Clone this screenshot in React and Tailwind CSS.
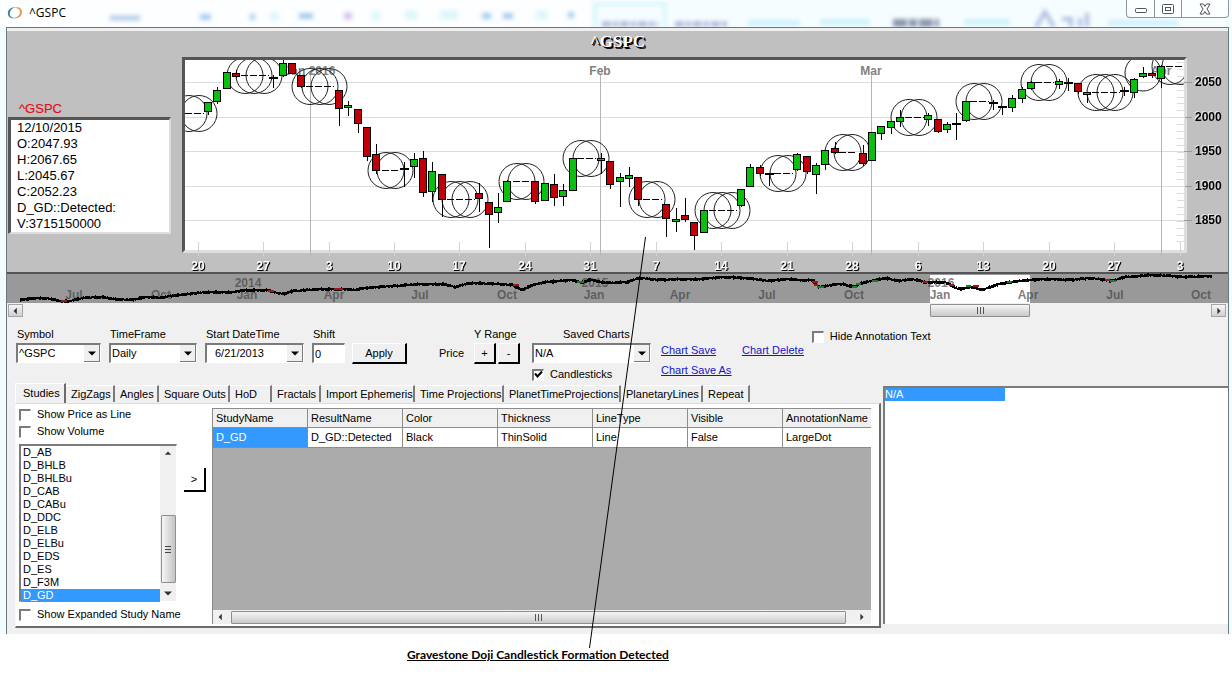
// src/App.jsx
import { useState } from "react";

// [x, kind, bodyTop, bodyBottom, high, low]  kind: g = up, r = down, d = doji
const CANDLES = [
  [208, "g", 102, 111, 102, 114],
  [217, "g", 90, 101, 87, 103],
  [227, "g", 72, 88, 72, 88],
  [236, "r", 73, 76, 70, 77],
  [273, "d", 78, 78, 75, 87],
  [283, "g", 63, 75, 60, 76],
  [292, "r", 63, 73, 63, 73],
  [301, "r", 75, 86, 75, 87],
  [339, "r", 90, 108, 90, 125],
  [348, "g", 105, 107, 101, 115],
  [358, "r", 109, 123, 109, 132],
  [367, "r", 127, 156, 127, 160],
  [376, "r", 154, 170, 144, 173],
  [404, "d", 169, 169, 162, 186],
  [414, "g", 159, 166, 153, 177],
  [423, "r", 158, 192, 151, 196],
  [432, "g", 171, 191, 162, 201],
  [442, "r", 174, 199, 174, 216],
  [479, "r", 193, 198, 183, 211],
  [489, "r", 202, 214, 202, 247],
  [498, "g", 207, 212, 193, 222],
  [507, "g", 181, 201, 180, 201],
  [535, "r", 181, 201, 181, 203],
  [545, "g", 183, 200, 183, 200],
  [554, "r", 184, 197, 174, 205],
  [563, "g", 190, 196, 184, 205],
  [573, "g", 158, 190, 158, 190],
  [601, "g", 158, 160, 153, 173],
  [610, "r", 161, 184, 161, 188],
  [620, "g", 177, 181, 173, 206],
  [629, "g", 175, 178, 167, 186],
  [638, "r", 177, 199, 177, 205],
  [666, "r", 204, 218, 204, 236],
  [676, "g", 219, 221, 208, 231],
  [685, "r", 215, 219, 198, 221],
  [694, "r", 222, 235, 222, 249],
  [704, "g", 210, 232, 210, 232],
  [741, "g", 189, 205, 189, 206],
  [750, "g", 167, 186, 164, 186],
  [760, "r", 167, 173, 165, 175],
  [769, "d", 174, 174, 173, 185],
  [797, "g", 154, 169, 153, 170],
  [807, "r", 156, 171, 156, 173],
  [816, "g", 165, 174, 163, 193],
  [825, "g", 150, 164, 150, 169],
  [835, "r", 148, 152, 142, 153],
  [863, "r", 153, 163, 145, 165],
  [872, "g", 132, 160, 132, 160],
  [881, "g", 126, 133, 126, 139],
  [891, "g", 121, 127, 121, 133],
  [900, "g", 117, 121, 110, 126],
  [928, "g", 115, 119, 113, 125],
  [938, "r", 119, 131, 119, 132],
  [947, "g", 124, 129, 122, 132],
  [956, "d", 124, 124, 113, 139],
  [966, "g", 101, 120, 101, 121],
  [993, "d", 103, 103, 100, 109],
  [1002, "d", 107, 107, 107, 114],
  [1012, "g", 98, 107, 95, 111],
  [1022, "g", 89, 98, 87, 102],
  [1031, "g", 82, 88, 81, 89],
  [1059, "g", 81, 84, 79, 88],
  [1068, "d", 83, 83, 78, 90],
  [1078, "r", 83, 91, 83, 93],
  [1087, "g", 92, 94, 92, 102],
  [1124, "d", 91, 91, 87, 95],
  [1134, "g", 79, 92, 78, 97],
  [1143, "g", 73, 76, 67, 77],
  [1152, "r", 73, 75, 72, 77],
  [1161, "g", 66, 78, 65, 87],
];

// detected formations: y of the flat bars, then circle centres
const DETECTED = [
  [113, [189, 199]],
  [75, [245, 254, 264]],
  [86, [310, 320, 329]],
  [170, [386, 395]],
  [199, [451, 460, 470]],
  [181, [517, 526]],
  [158, [581, 591]],
  [199, [647, 657]],
  [210, [713, 722, 732]],
  [173, [778, 788]],
  [152, [843, 852]],
  [117, [909, 919]],
  [101, [974, 984]],
  [82, [1039, 1049]],
  [92, [1096, 1105, 1115]],
  [66, [1170, 1180]],
];

const PRICES = [[2050, 82], [2000, 117], [1950, 151], [1900, 186], [1850, 220]];
const MONTHS = [["Jan 2016", 310], ["Feb", 600], ["Mar", 871], ["Apr", 1161]];
const DAYS = [
  ["20", 198], ["27", 263], ["3", 329], ["10", 394], ["17", 459], ["24", 525], ["31", 590], ["7", 656],
  ["14", 721], ["21", 787], ["28", 852], ["6", 918], ["13", 983], ["20", 1049], ["27", 1114], ["3", 1180],
];
const MINOR = Array.from({ length: 27 }, (_, i) => 62 + i * 6.9);

const NAV_LINE =
  "20,300 27,299 33,298 47,298 60,301 70,301 83,298 100,297 116,299 132,300 146,297 153,297 160,298 170,296 187,294 207,292 233,292 247,290 267,290 274,292 283,294 293,291 320,289 340,289 353,290 367,288 393,286 420,284 443,284 455,287 470,283 500,284 513,285 522,290 533,285 547,282 573,280 581,283 590,280 607,283 627,282 640,278 660,280 677,279 700,279 727,277 753,279 770,281 787,279 800,280 813,280 819,287 832,285 842,284 854,287 862,283 885,278 899,281 912,279 925,282 945,282 958,289 972,287 982,290 999,284 1019,281 1045,279 1069,280 1092,278 1112,281 1125,277 1152,275 1172,276 1182,277 1212,276";

const NAV_LABELS = [
  ["Jul", 74], ["Oct", 161], ["Jan", 247], ["Apr", 334], ["Jul", 420], ["Oct", 507], ["Jan", 594],
  ["Apr", 680], ["Jul", 767], ["Oct", 854], ["Jan", 940], ["Apr", 1028], ["Jul", 1115], ["Oct", 1201],
];

const QUOTE = ["12/10/2015", "O:2047.93", "H:2067.65", "L:2045.67", "C:2052.23", "D_GD::Detected:", "V:3715150000"];
const STUDIES = ["D_AB", "D_BHLB", "D_BHLBu", "D_CAB", "D_CABu", "D_DDC", "D_ELB", "D_ELBu", "D_EDS", "D_ES", "D_F3M", "D_GD"];

const TABS = [
  ["ZigZags", "w-[49px]"],
  ["Angles", "w-[44px]"],
  ["Square Outs", "w-[71px]"],
  ["HoD", "w-[42px]"],
  ["Fractals", "w-[49px]"],
  ["Import Ephemeris", "w-[94px]"],
  ["Time Projections", "w-[89px]"],
  ["PlanetTimeProjections", "w-[117px]"],
  ["PlanetaryLines", "w-[82px]"],
  ["Repeat", "w-[47px]"],
];

const COLUMNS = ["StudyName", "ResultName", "Color", "Thickness", "LineType", "Visible", "AnnotationName"];
const ROW = ["D_GD", "D_GD::Detected", "Black", "ThinSolid", "Line", "False", "LargeDot"];

const sunken = "border-t-2 border-l-2 border-b border-r border-t-[#7b7b7b] border-l-[#7b7b7b] border-b-white border-r-white";
const raised = "bg-[#f0f0f0] border-t border-l border-t-white border-l-white border-b-2 border-r-2 border-b-black border-r-black";

const Arrow = ({ dir, className = "" }) => {
  const points = { left: "6,1 2,5 6,9", right: "3,1 7,5 3,9", up: "1,6 5,2 9,6", down: "0,3 10,3 5,8" }[dir];
  return (
    <svg viewBox="0 0 10 10" className={className} aria-hidden="true">
      <polygon points={points} fill="currentColor" />
    </svg>
  );
};

const Check = ({ label, ...props }) => (
  <label className="relative flex items-center gap-[6px] leading-[13px]">
    <input type="checkbox" className={`peer appearance-none w-3 h-3 shrink-0 bg-white ${sunken}`} {...props} />
    <svg viewBox="0 0 9 9" className="pointer-events-none absolute left-[2px] top-[2px] w-[9px] h-[9px] opacity-0 peer-checked:opacity-100" aria-hidden="true">
      <path d="M1 3.500l2.500 3L8 1.500" fill="none" stroke="#000" strokeWidth="2" />
    </svg>
    {label}
  </label>
);

const Dropdown = ({ id, value, className }) => (
  <div className={`relative flex h-5 bg-white ${sunken} ${className}`}>
    <select id={id} defaultValue={value} className="appearance-none flex-1 min-w-0 px-px pb-px bg-white leading-4">
      <option>{value}</option>
    </select>
    <span className="pointer-events-none absolute right-0 inset-y-0 w-4 flex items-center justify-center bg-[#f0f0f0] border-r border-b border-[#7b7b7b]">
      <Arrow dir="down" className="w-2 h-2" />
    </span>
  </div>
);

const TitleBar = () => (
  <header className="relative flex h-[27px] items-start justify-between overflow-hidden bg-[#fcfeff]">
    {/* what shows through the glass */}
    <svg viewBox="0 0 1232 27" className="absolute inset-0 w-full h-full" aria-hidden="true">
      <defs>
        <filter id="glass"><feGaussianBlur stdDeviation="2" /></filter>
      </defs>
      <path d="M590 0H1232V27H590z" fill="#f6fdff" />
      <g filter="url(#glass)">
        <path d="M110 18h30" stroke="#b4cdea" strokeWidth="5" />
        <path d="M200 17h11M250 17h5M299 16h14M482 16h9M503 16h10M568 15h6" stroke="#a9cdee" strokeWidth="6" />
        <path d="M344 16h8" stroke="#d6c2ee" strokeWidth="7" />
        <path d="M271 19l7-5M372 16h8M405 15h12M440 15h18M536 15h12" stroke="#dcf8fc" strokeWidth="9" />
        <rect x="595" y="4" width="70" height="30" fill="none" stroke="#cff6fb" strokeWidth="3" />
        <path d="M602 24h56M675 24h54" stroke="#a6b4d8" strokeWidth="5" strokeDasharray="9 2 5 2" />
        <path d="M748 23h52M820 22h50M964 22h46M1108 23h70" stroke="#cdf2fb" strokeWidth="6" />
        <path d="M893 23h46" stroke="#8a96b0" strokeWidth="8" strokeDasharray="14 2 8 2" />
        <path d="M1036 27l9-15l9 15M1062 19h9v8M1080 18v9M1087 13v14" stroke="#afc0e2" strokeWidth="4" fill="none" />
      </g>
    </svg>
    <div className="relative flex items-center gap-[6px] pl-[7px] pt-[5px]">
      <svg viewBox="0 0 16 16" className="w-4 h-4" fill="none" aria-hidden="true">
        <path d="M9 2C4 2 0 5 1 9c0 3 3 5 7 4C4 13 2 10 3 7C4 4 6 3 9 2z" fill="#3f7fa8" />
        <path d="M7 3C11 1 15 3 15 7c0 4-4 7-8 6c4-1 6-3 6-6C13 4 11 3 7 3z" fill="#e8944a" />
      </svg>
      <span className="font-['Open_Sans',sans-serif] text-xs leading-4">^GSPC</span>
    </div>
    <div className="relative mr-[3px] flex h-[18px] overflow-hidden rounded-b border border-t-0 border-[#8d979e] bg-white/70">
      <button aria-label="Minimize" className="w-[28px] flex justify-center items-center border-r border-[#8d979e]">
        <svg viewBox="0 0 14 14" className="w-3.5 h-3.5"><rect x="1.5" y="6.5" width="11" height="4" rx="1" fill="#fff" stroke="#50545c" /></svg>
      </button>
      <button aria-label="Restore" className="w-[27px] flex justify-center items-center border-r border-[#8d979e]">
        <svg viewBox="0 0 14 14" className="w-3.5 h-3.5" fill="#fff" stroke="#50545c"><rect x="1.5" y="2.5" width="11" height="9" rx="1" /><rect x="4.5" y="5.5" width="5" height="3" /></svg>
      </button>
      <button aria-label="Close" className="w-[46px] flex justify-center items-center">
        <svg viewBox="0 0 14 14" className="w-3.5 h-3.5"><path d="M2 2h3.500L7 4.500L8.500 2H12L9 7l3 5H8.500L7 9.500L5.500 12H2l3-5z" fill="#fff" stroke="#50545c" /></svg>
      </button>
    </div>
  </header>
);

const PriceChart = () => (
  <svg viewBox="182 57 1046 215" className="block flex-1 min-w-0 font-['Liberation_Sans',sans-serif] text-xs font-bold">
    <defs>
      <clipPath id="plot"><rect x="185" y="60" width="999" height="190" /></clipPath>
    </defs>
    <rect x="182" y="57" width="1005" height="196" fill="#dedede" />
    <path d="M182 253V57h1005l-3 3H185v190z" fill="#555" />
    <rect x="185" y="60" width="999" height="190" fill="#fff" />

    <g shapeRendering="crispEdges" strokeWidth="1">
      {PRICES.map(([p, y]) => (
        <g key={p}>
          <path d={`M185 ${y + 0.5}H1184`} stroke="#dcdcdc" />
          <path d={`M1184 ${y + 0.5}H1192`} stroke="#9a9a9a" />
        </g>
      ))}
      {MINOR.map((y) => <path key={y} d={`M1177 ${Math.round(y) + 0.5}H1185`} stroke="#dcdcdc" />)}
      {DAYS.map(([d, x]) => <path key={x} d={`M${x + 0.5} 242V256`} stroke="#d2d2d2" />)}
      {MONTHS.map(([m, x]) => <path key={m} d={`M${x + 0.5} 75V257`} stroke="#b4b4b4" />)}
    </g>

    <g clipPath="url(#plot)">
      {MONTHS.map(([m, x]) => <text key={m} x={x} y="75" textAnchor="middle" fill="#7f7f7f">{m}</text>)}
      <circle cx="1143" cy="73" r="18" fill="none" stroke="#222" />
      {DETECTED.map(([y, xs]) => (
        <g key={xs[0]} fill="none" stroke="#222">
          {xs.map((x) => <circle key={x} cx={x} cy={y + 0.5} r="18" />)}
          <path d={`M${xs[0] - 4} ${y + 0.5}H${xs[xs.length - 1] + 5}`} stroke="#000" strokeDasharray="7 2" shapeRendering="crispEdges" />
        </g>
      ))}
      <g shapeRendering="crispEdges">
        {CANDLES.map(([x, kind, top, bottom, high, low]) => (
          <g key={x}>
            <path d={`M${x + 0.5} ${high}V${low + 1}`} stroke="#000" />
            {kind === "d" ? (
              <path d={`M${x - 4} ${top}H${x + 5}`} stroke="#000" strokeWidth="2" />
            ) : (
              <rect x={x - 3.5} y={top + 0.5} width="7" height={Math.max(bottom - top, 2)} fill={kind === "g" ? "#0bbf0f" : "#c00008"} stroke="#000" />
            )}
          </g>
        ))}
      </g>
    </g>

    {PRICES.map(([p, y]) => <text key={p} x="1195" y={y + 4} className="[filter:drop-shadow(-1px_-1px_0_#e8e8e8)]">{p}</text>)}
    {DAYS.map(([d, x]) => (
      <text key={x} x={x} y="270" textAnchor="middle" fill="#fff" className="[filter:drop-shadow(1px_1px_0_#000)]">{d}</text>
    ))}
  </svg>
);

const Navigator = () => (
  <svg viewBox="7 272 1221 31" className="block w-full font-['Liberation_Sans',sans-serif] text-xs font-bold">
    <rect x="7" y="272" width="1221" height="31" fill="#999" />
    <rect x="930" y="275" width="100" height="28" fill="#fff" />
    <rect x="7" y="272" width="1221" height="2" fill="#555" />
    <g fill="#444" fillOpacity="0.7" textAnchor="middle">
      <text x="248" y="287">2014</text>
      <text x="595" y="287">2015</text>
      <text x="941" y="287">2016</text>
      {NAV_LABELS.map(([m, x]) => <text key={x} x={x} y="299">{m}</text>)}
    </g>
    <g fill="none" stroke="#000" shapeRendering="crispEdges">
      <polyline points={NAV_LINE} strokeWidth="2" />
      <polyline points={NAV_LINE} strokeWidth="3" strokeDasharray="5 1 1 2 7 3 2 1" />
      <polyline points={NAV_LINE} strokeWidth="4" strokeDasharray="1 6 2 11 1 17" />
    </g>
    <g stroke="#a0141c" strokeWidth="2">
      <path d="M61 301h6M268 291h6M334 289h9M513 285h6M812 282h6M814 285h4M923 282h5M949 285h5M973 286h6M1105 280h5" />
    </g>
    <g stroke="#1d7a2a" strokeWidth="2">
      <path d="M577 282h7M817 287h7M856 284h5M872 281h6M966 286h5M1007 282h5M1110 281h6M852 287h5" />
    </g>
  </svg>
);

const Field = ({ id, label, className = "", children }) => (
  <div className={`flex flex-col ${className}`}>
    <label htmlFor={id} className="mb-[3px] pl-px leading-3 whitespace-nowrap">{label}</label>
    {children}
  </div>
);

const Controls = () => (
  <section className="flex items-start h-[65px] pt-[10px] pl-[9px]">
    <Field id="symbol" label="Symbol"><Dropdown id="symbol" value="^GSPC" className="w-[85px]" /></Field>
    <Field id="timeframe" label="TimeFrame" className="ml-2"><Dropdown id="timeframe" value="Daily" className="w-[88px]" /></Field>
    <Field id="start" label="Start DateTime" className="ml-2">
      <div className={`flex h-5 w-[99px] bg-white ${sunken}`}>
        <input id="start" defaultValue="6/21/2013" className="flex-1 min-w-0 pl-2" />
        <button aria-label="Pick date" className="w-4 flex items-center justify-center bg-[#f0f0f0] border-r border-b border-[#7b7b7b]">
          <Arrow dir="down" className="w-2 h-2" />
        </button>
      </div>
    </Field>
    <Field id="shift" label="Shift" className="ml-2">
      <input id="shift" defaultValue="0" className={`h-5 w-[33px] px-px bg-white ${sunken}`} />
    </Field>
    <button className={`ml-[7px] mt-[15px] h-[21px] w-[55px] ${raised}`}>Apply</button>
    <span className="ml-8 mt-[19px] w-[35px] leading-3">Price</span>
    <div>
      <p className="mb-[3px] leading-3 whitespace-nowrap">Y Range</p>
      <div className="flex gap-[2px]">
        <button className={`h-[21px] w-[22px] leading-none ${raised}`}>+</button>
        <button className={`h-[21px] w-[22px] leading-none ${raised}`}>-</button>
      </div>
    </div>
    <div className="ml-3 w-[119px]">
      <label htmlFor="saved" className="mb-[3px] block pl-[31px] leading-3">Saved Charts</label>
      <Dropdown id="saved" value="N/A" className="w-full" />
      <div className="mt-[5px]"><Check label="Candlesticks" defaultChecked /></div>
    </div>
    <nav className="ml-[10px] mt-4 grid grid-cols-[81px_auto] gap-y-2 leading-3 text-[#1515c8] underline">
      <a href="#save">Chart Save</a>
      <a href="#delete">Chart Delete</a>
      <a href="#save-as">Chart Save As</a>
    </nav>
    <div className="ml-2 mt-[2px]"><Check label="Hide Annotation Text" /></div>
  </section>
);

const StudyList = () => {
  const [selected, setSelected] = useState("D_GD");
  return (
    <div className={`flex w-[158px] h-[158px] ${sunken}`}>
      <ul role="listbox" aria-label="Studies" className="flex-1 leading-[13px]">
        {STUDIES.map((s) => (
          <li
            key={s}
            role="option"
            aria-selected={s === selected}
            onClick={() => setSelected(s)}
            className={s === selected ? "pl-[2px] bg-[#3399ff] text-white" : "pl-[2px]"}
          >
            {s}
          </li>
        ))}
      </ul>
      <div className="flex flex-col w-4 items-center bg-[#f0f0f0] text-[#333]">
        <Arrow dir="up" className="w-2 h-2 mt-1" />
        <div className="mt-[57px] h-[68px] w-[15px] flex items-center justify-center border border-[#8f8f8f] rounded-[1px] bg-linear-to-r from-[#f6f6f6] to-[#c4c4c8]">
          <span className="w-[6px] h-[7px] border-y border-[#444] flex items-center"><i className="w-full h-px bg-[#444]" /></span>
        </div>
        <Arrow dir="down" className="w-2 h-2 mt-[6px]" />
      </div>
    </div>
  );
};

const Grip = () => (
  <span className="flex gap-[2px]">
    <i className="w-px h-[7px] bg-[#555]" />
    <i className="w-px h-[7px] bg-[#555]" />
    <i className="w-px h-[7px] bg-[#555]" />
  </span>
);

const ResultGrid = () => (
  <div className="flex-1 min-w-0 flex flex-col bg-[#ababab] border-l border-t border-[#8c8c8c]">
    <table className="w-full table-fixed border-separate border-spacing-0 text-left leading-none">
      <thead>
        <tr className="h-[19px] bg-[#f0f0f0]">
          {COLUMNS.map((c) => (
            <th key={c} className="w-[95px] last:w-auto pl-[3px] font-normal border-r border-b last:border-r-0 border-[#8c8c8c]">{c}</th>
          ))}
        </tr>
      </thead>
      <tbody>
        <tr className="h-5 bg-white">
          {ROW.map((v, i) => (
            <td key={i} className={`pl-[3px] border-r border-b last:border-r-0 border-[#8c8c8c] ${i === 0 ? "bg-[#3399ff] text-white" : ""}`}>{v}</td>
          ))}
        </tr>
      </tbody>
    </table>
    <div className="mt-auto h-[14px] flex items-center bg-[#f0f0f0] text-[#333]">
      <Arrow dir="left" className="w-2 h-2 ml-1 mr-[6px]" />
      <div className="flex-1 h-[13px] flex items-center justify-center border border-[#8f8f8f] rounded-[1px] bg-linear-to-b from-[#f6f6f6] to-[#cacace]"><Grip /></div>
      <Arrow dir="right" className="w-2 h-2 ml-3 mr-[5px]" />
    </div>
  </div>
);

const App = () => (
  <div className="relative min-h-[676px] bg-white font-['Liberation_Sans',Arial,sans-serif] text-[11px] text-black">
    <TitleBar />
    <div className="pl-[6px] pr-[3px] bg-[#f2fcff]">
      <main className="border-x border-t border-[#687a80] bg-[#f0f0f0]">
        <section className="mt-[3px] bg-[#c0c0c0]">
          <h1 className="h-[26px] pt-px text-center font-['Liberation_Serif',serif] font-bold text-[17px] leading-5 text-white [text-shadow:1px_1px_0_#000,2px_2px_0_#000]">^GSPC</h1>
          <div className="flex">
            <div className="w-[175px] shrink-0 pt-[44px]">
              <p className="pl-3 text-[13px] leading-4 text-[#e0101c] [-webkit-text-stroke:0.2px]">^GSPC</p>
              <div className="ml-px w-[163px] h-[117px] pl-[6px] bg-white border-t-[3px] border-l-[3px] border-t-[#555] border-l-[#555] border-b-2 border-r-2 border-b-[#dedede] border-r-[#dedede] text-[13px] leading-4">
                {QUOTE.map((line) => <p key={line}>{line}</p>)}
              </div>
            </div>
            <PriceChart />
          </div>
        </section>
        <Navigator />
        <div className="flex h-[15px] items-center px-px text-[#333]">
          <button aria-label="Scroll left" className="w-[15px] h-[13px] flex items-center justify-center border border-[#a5a5a5] bg-linear-to-b from-[#f6f6f6] to-[#d0d0d4]"><Arrow dir="left" className="w-2 h-2" /></button>
          <div className="flex-1 grid grid-cols-[907fr_100fr_181fr]">
            <div className="col-start-2 h-[13px] flex items-center justify-center border border-[#8f8f8f] rounded-[1px] bg-linear-to-b from-[#f6f6f6] to-[#cacace]"><Grip /></div>
          </div>
          <button aria-label="Scroll right" className="w-[15px] h-[13px] mr-px flex items-center justify-center border border-[#a5a5a5] bg-linear-to-b from-[#f6f6f6] to-[#d0d0d4]"><Arrow dir="right" className="w-2 h-2" /></button>
        </div>
        <Controls />

        <section className="grid grid-cols-[866fr_345fr] gap-[2px] pl-2 pb-[6px]">
          <div className="min-w-0">
            <div role="tablist" className="flex items-end h-5">
              <button role="tab" aria-selected="true" className="h-5 w-[51px] pl-[7px] text-left border-l border-t border-l-white border-t-white border-r-2 border-r-[#6b6b6b]">Studies</button>
              {TABS.map(([name, width]) => (
                <button key={name} role="tab" aria-selected="false" className={`h-[17px] mb-px pl-[5px] text-left whitespace-nowrap border-t border-t-white border-r-2 border-r-[#7b7b7b] ${width}`}>
                  {name}
                </button>
              ))}
            </div>
            <div className="flex h-[225px] bg-white border border-l-[#f8f8f8] border-t-[#dcdcdc] border-r-2 border-b-2 border-r-[#6b6b6b] border-b-[#6b6b6b] pt-1 pl-[3px] pr-2 pb-[2px]">
              <div className="w-[165px] shrink-0 flex flex-col">
                <div className="flex flex-col gap-1"><Check label="Show Price as Line" /><Check label="Show Volume" /></div>
                <div className="my-[6px]"><StudyList /></div>
                <Check label="Show Expanded Study Name" />
              </div>
              <button aria-label="Add study" className="w-[22px] h-6 mt-[60px] mr-[6px] shrink-0 bg-white border-r-2 border-b-2 border-black">&gt;</button>
              <ResultGrid />
            </div>
          </div>
          <ul role="listbox" aria-label="Annotations" className="mt-[3px] mb-1 bg-white border-l-2 border-t-2 border-[#7b7b7b] leading-[13px]">
            <li role="option" aria-selected="true" className="w-[120px] bg-[#3399ff] text-white">N/A</li>
          </ul>
        </section>
      </main>
    </div>
    <p className="ml-[407px] mt-[13px] font-[Lato,sans-serif] font-bold text-xs leading-4 underline">Gravestone Doji Candlestick Formation Detected</p>

    {/* callout from the caption to the candle */}
    <svg viewBox="0 0 1232 676" className="pointer-events-none absolute left-0 top-0 w-full" aria-hidden="true">
      <path d="M645.500 237L589.500 648" stroke="#000" />
    </svg>
  </div>
);

export default App;
